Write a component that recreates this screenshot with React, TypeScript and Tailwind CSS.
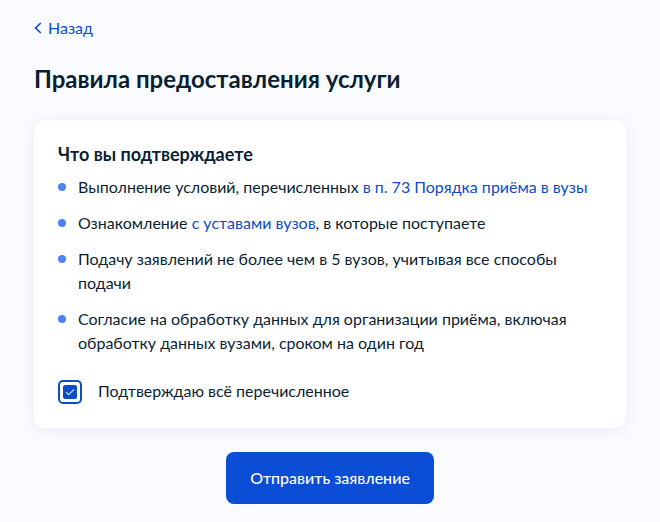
const linkCls = "text-[#0b4dc8]";

const items = [
  <>
    Выполнение условий, перечисленных <span className={linkCls}>в п. 73 Порядка приёма в вузы</span>
  </>,
  <>
    Ознакомление <span className={linkCls}>с уставами вузов</span>, в которые поступаете
  </>,
  <>Подачу заявлений не более чем в 5 вузов, учитывая все способы подачи</>,
  <>Согласие на обработку данных для организации приёма, включая обработку данных вузами, сроком на один год</>,
];

export default function App() {
  return (
    <div className="h-[522px] w-[660px] overflow-hidden bg-[#f9fbff] px-[34px] pt-[18px] font-['Lato','Noto_Sans',sans-serif] text-[#0b1f33]">
      <a className="flex h-5 items-center gap-[6px] text-[16px] text-[#0b4dc8]">
        <svg width="8" height="12" viewBox="0 0 8 12" fill="none">
          <path d="M6.8 1L1.6 6l5.2 5" stroke="#0b4dc8" strokeWidth="1.7" />
        </svg>
        Назад
      </a>
      <h1 className="mt-[27px] text-[24px] font-bold leading-[28px]">Правила предоставления услуги</h1>
      <div className="mt-[27px] w-[592px] rounded-[12px] bg-white px-6 pb-6 pt-[23px] shadow-[0_2px_16px_rgba(11,31,51,0.07)]">
        <h2 className="text-[18px] font-bold leading-[22px]">Что вы подтверждаете</h2>
        <ul className="mt-[10px] flex flex-col gap-[12px] text-[16px] leading-6">
          {items.map((item, i) => (
            <li key={i} className="flex">
              <span className="mr-3 mt-[8px] h-2 w-2 shrink-0 rounded-full bg-[#4f80f5]" />
              <span>{item}</span>
            </li>
          ))}
        </ul>
        <label className="mt-[25px] flex items-center gap-[16px] text-[16px] leading-6">
          <span className="flex h-6 w-6 items-center justify-center rounded-[5px] border-2 border-[#0b4dc8]">
            <span className="flex h-[14px] w-[14px] items-center justify-center rounded-[2px] bg-[#0b4dc8]">
              <svg width="12" height="12" viewBox="0 0 12 12" fill="none">
                <path d="M2 6.2l2.7 2.5 5.3-5.4" stroke="#dbe6fb" strokeWidth="1.1" />
              </svg>
            </span>
          </span>
          <span className="-translate-y-px">Подтверждаю всё перечисленное</span>
        </label>
      </div>
      <div className="mt-6 flex justify-center">
        <button className="h-[52px] w-[208px] rounded-[8px] bg-[#0b4dd4] text-[16px] font-medium text-white">
          Отправить заявление
        </button>
      </div>
    </div>
  );
}
